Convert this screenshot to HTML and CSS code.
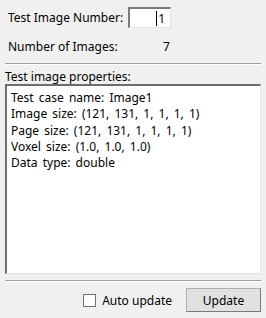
FILE: index.html
```html
<!DOCTYPE html>
<html>
    <head>
        <meta charset="utf-8">
        <link rel="stylesheet" href="styles.css">
    </head>
    <body>
        <div id="panel">
            <div class="row first">
                <span class="label">Test Image Number:</span>
                <span class="spin"><span class="caret"></span>1</span>
            </div>
            <div class="row second">
                <span class="label">Number of Images:</span>
                <span class="count">7</span>
            </div>
            <div class="sep"></div>
            <div class="caption">Test image properties:</div>
            <div id="props">
                <div>Test case name: Image1</div>
                <div>Image size: (121, 131, 1, 1, 1, 1)</div>
                <div>Page size: (121, 131, 1, 1, 1, 1)</div>
                <div>Voxel size: (1.0, 1.0, 1.0)</div>
                <div>Data type: double</div>
            </div>
            <div class="sep low"></div>
            <div class="bottom">
                <label class="auto"><span class="check"></span>Auto update</label>
                <button id="update">Update</button>
            </div>
        </div>
    </body>
</html>
```

FILE: styles.css
```css
body {
    margin: 0;
    background: #f0f0f0;
    color: #000000;
    font-family: "Noto Sans", sans-serif;
    font-size: 12px;
}

#panel {
    width: 266px;
    height: 318px;
    display: flex;
    flex-direction: column;
}

.row {
    display: flex;
    align-items: center;
    padding-left: 8px;
}

.row.first {
    margin-top: 7px;
    height: 21px;
}

.row.second {
    margin-top: 9px;
    height: 18px;
}

.label {
    width: 120px;
}

.spin {
    box-sizing: border-box;
    width: 43px;
    height: 21px;
    background: #ffffff;
    border-top: 2px solid #7a7a7a;
    border-left: 2px solid #7a7a7a;
    border-right: 1px solid #e3e3e3;
    border-bottom: 1px solid #e3e3e3;
    display: flex;
    align-items: center;
    justify-content: flex-end;
    padding-right: 5px;
}

.caret {
    width: 1px;
    height: 15px;
    background: #000000;
    margin-right: 1px;
}

.count {
    margin-left: 35px;
}

.sep {
    margin: 8px 5px 0 5px;
    border-top: 1px solid #a0a0a0;
    border-bottom: 1px solid #ffffff;
}

.caption {
    margin: 4px 0 0 5px;
    line-height: 15px;
}

#props {
    margin: 0 5px 0 5px;
    height: 190px;
    box-sizing: border-box;
    background: #ffffff;
    border-top: 2px solid #6d6d6d;
    border-left: 2px solid #6d6d6d;
    border-right: 1px solid #e3e3e3;
    border-bottom: 1px solid #e3e3e3;
    padding: 4px 0 0 4px;
    line-height: 16.3px;
    word-spacing: 2px;
}

.sep.low {
    margin-top: 6px;
}

.bottom {
    display: flex;
    justify-content: flex-end;
    align-items: center;
    margin-top: 6px;
    padding-right: 5px;
}

.auto {
    display: flex;
    align-items: center;
    margin-right: 14px;
}

.check {
    box-sizing: border-box;
    width: 13px;
    height: 13px;
    background: #ffffff;
    border: 1px solid #707070;
    margin-right: 6px;
}

#update {
    width: 75px;
    height: 24px;
    font-family: "Noto Sans", sans-serif;
    font-size: 12px;
    background: #e1e1e1;
    border: 1px solid #adadad;
    border-right-color: #7a7a7a;
    border-bottom-color: #7a7a7a;
    padding: 0;
}
```
